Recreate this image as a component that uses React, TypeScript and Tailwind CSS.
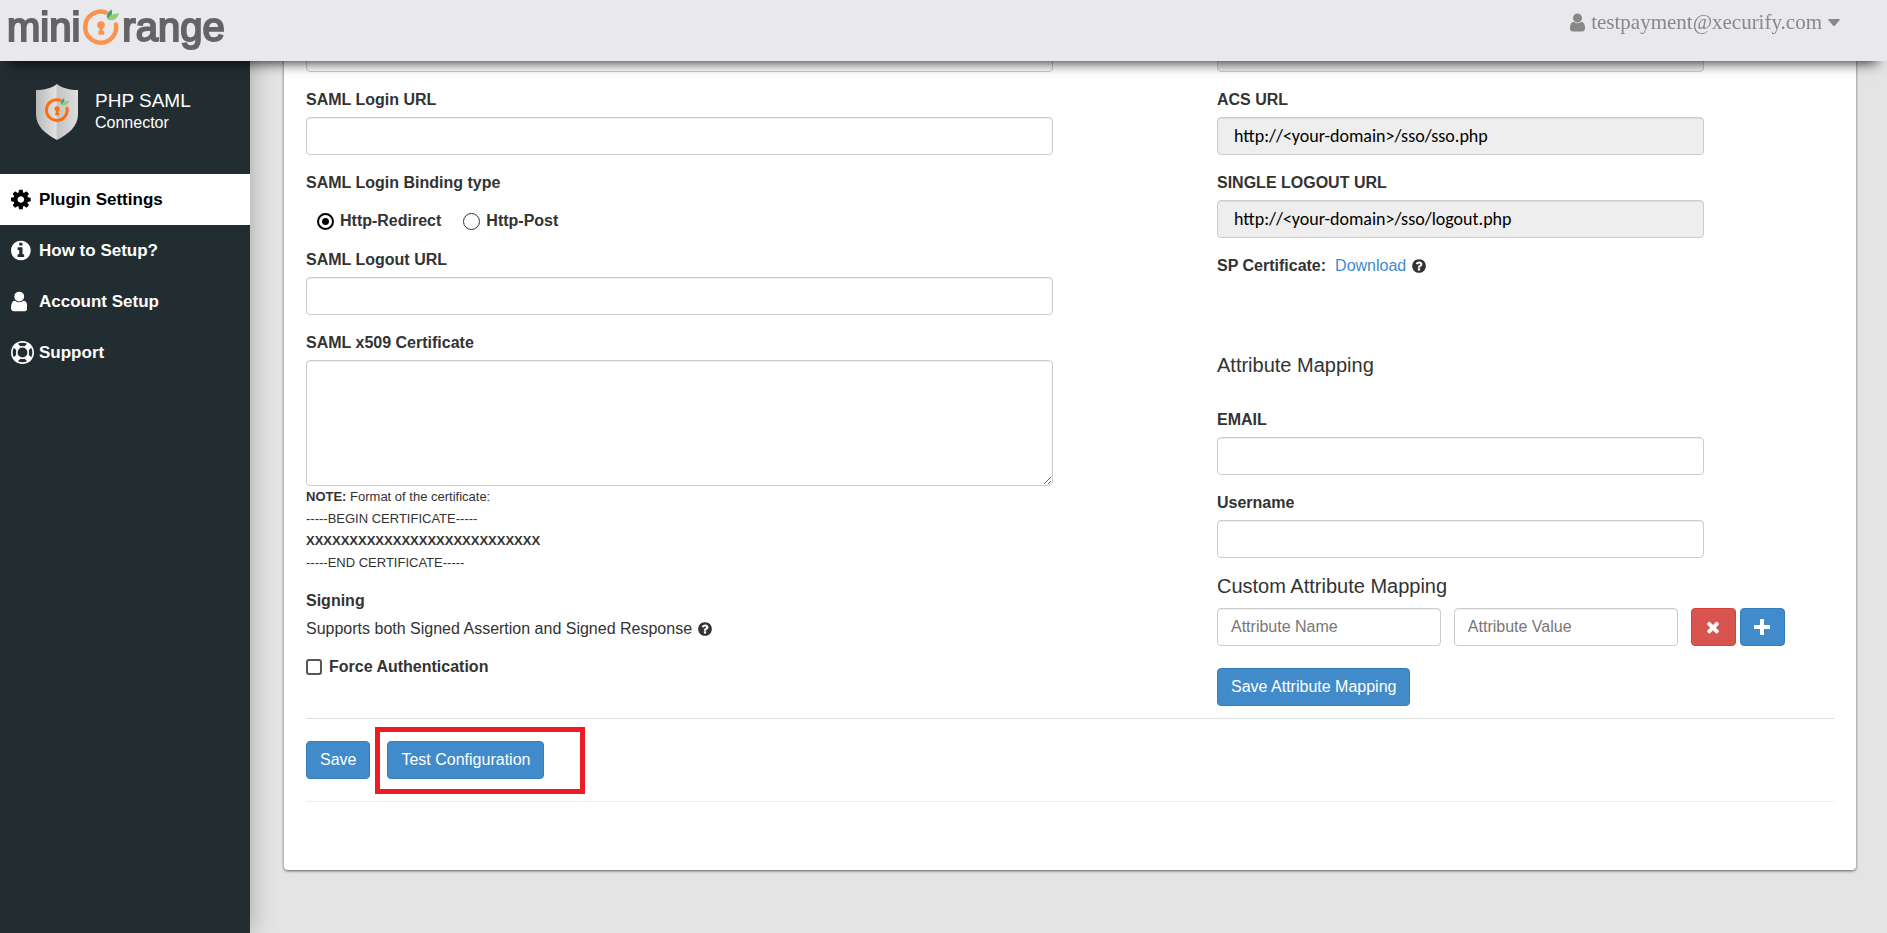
import { FC, ReactNode, useState } from "react";
import clsx from "clsx";

interface GlyphProps {
  path: string;
  viewBox?: string;
  className?: string;
}

const Glyph: FC<GlyphProps> = ({
  path,
  viewBox = "0 0 1792 1792",
  className,
}) => (
  <svg
    viewBox={viewBox}
    className={clsx("shrink-0", className)}
    fill="currentColor"
    aria-hidden="true"
  >
    <path d={path} />
  </svg>
);

const COG =
  "M1024 896q0-106-75-181t-181-75-181 75-75 181 75 181 181 75 181-75 75-181zm512-109v222q0 12-8 23t-20 13l-185 28q-19 54-39 91 35 50 107 138 10 12 10 25t-9 23q-27 37-99 108t-94 71q-12 0-26-9l-138-108q-44 23-91 38-16 136-29 186-7 28-36 28h-222q-14 0-24.5-8.5t-11.5-21.5l-28-184q-49-16-90-37l-141 107q-10 9-25 9-14 0-25-11-126-114-165-168-7-10-7-23 0-12 8-23 15-21 51-66.5t54-70.5q-27-50-41-99l-183-27q-13-2-21-12.5t-8-23.5v-222q0-12 8-23t19-13l186-28q14-46 39-92-40-57-107-138-10-12-10-24 0-10 9-23 26-36 98.5-107.5t94.500-71.500q13 0 26 10l138 107q44-23 91-38 16-136 29-186 7-28 36-28h222q14 0 24.500 8.500t11.500 21.500l28 184q49 16 90 37l142-107q9-9 24-9 13 0 25 10 129 119 165 170 7 8 7 22 0 12-8 23-15 21-51 66.500t-54 70.500q26 50 41 98l183 28q13 2 21 12.500t8 23.500z";
const INFO =
  "M1152 1376v-160q0-14-9-23t-23-9h-96v-512q0-14-9-23t-23-9h-320q-14 0-23 9t-9 23v160q0 14 9 23t23 9h96v320h-96q-14 0-23 9t-9 23v160q0 14 9 23t23 9h448q14 0 23-9t9-23zm-128-896v-160q0-14-9-23t-23-9h-192q-14 0-23 9t-9 23v160q0 14 9 23t23 9h192q14 0 23-9t9-23zm640 416q0 209-103 385.5t-279.5 279.5-385.5 103-385.5-103-279.5-279.5-103-385.5 103-385.5 279.5-279.5 385.5-103 385.5 103 279.5 279.5 103 385.5z";
const USER =
  "M1536 1399q0 109-62.5 187t-150.5 78h-854q-88 0-150.5-78t-62.5-187q0-85 8.5-160.5t31.5-152 58.5-131 94-89 134.5-34.5q131 128 313 128t313-128q76 0 134.5 34.5t94 89 58.500 131 31.500 152 8.500 160.500zm-256-887q0 159-112.500 271.500t-271.500 112.500-271.500-112.500-112.500-271.500 112.500-271.500 271.500-112.500 271.500 112.500 112.500 271.500z";
const LIFE_RING =
  "M896 0q182 0 348 71t286 191 191 286 71 348-71 348-191 286-286 191-348 71-348-71-286-191-191-286-71-348 71-348 191-286 286-191 348-71zm0 128q-190 0-361 90l194 194q82-28 167-28t167 28l194-194q-171-90-361-90zm-678 1129l194-194q-28-82-28-167t28-167l-194-194q-90 171-90 361t90 361zm678 407q190 0 361-90l-194-194q-82 28-167 28t-167-28l-194 194q171 90 361 90zm0-384q159 0 271.5-112.5t112.5-271.5-112.5-271.5-271.5-112.5-271.5 112.5-112.5 271.5 112.5 271.5 271.5 112.5zm484-217l194 194q90-171 90-361t-90-361l-194 194q28 82 28 167t-28 167z";
const QUESTION =
  "M1024 1376v-192q0-14-9-23t-23-9h-192q-14 0-23 9t-9 23v192q0 14 9 23t23 9h192q14 0 23-9t9-23zm256-672q0-88-55.5-163t-138.5-116-170-41q-243 0-371 213-15 24 8 42l132 100q7 6 19 6 16 0 25-12 53-68 86-92 34-24 86-24 48 0 85.5 26t37.5 59q0 38-20 61t-68 45q-63 28-115.5 86.5t-52.5 125.5v36q0 14 9 23t23 9h192q14 0 23-9t9-23q0-19 21.5-49.5t54.5-49.5q32-18 49-28.5t46-35 44.5-48 28-60.5 12.5-81zm384 192q0 209-103 385.5t-279.5 279.5-385.5 103-385.5-103-279.5-279.5-103-385.5 103-385.5 279.5-279.5 385.5-103 385.5 103 279.5 279.5 103 385.5z";
const TIMES =
  "M1490 1322q0 40-28 68l-136 136q-28 28-68 28t-68-28l-294-294-294 294q-28 28-68 28t-68-28l-136-136q-28-28-28-68t28-68l294-294-294-294q-28-28-28-68t28-68l136-136q28-28 68-28t68 28l294 294 294-294q28-28 68-28t68 28l136 136q28 28 28 68t-28 68l-294 294 294 294q28 28 28 68z";

const navItems = [
  { label: "Plugin Settings", path: COG, viewBox: "0 0 1536 1792" },
  { label: "How to Setup?", path: INFO, viewBox: "128 0 1536 1792" },
  { label: "Account Setup", path: USER, viewBox: "256 0 1280 1792" },
  { label: "Support", path: LIFE_RING, viewBox: "0 0 1792 1792" },
];

// open ring with a keyhole and two leaves, drawn in a 36x36 box
const OrangeMark = ({ color }: { color: string }) => (
  <>
    <path
      d="M22.500 3.400A15.500 15.500 0 1 0 33 15.500"
      fill="none"
      stroke={color}
      strokeWidth="4.500"
      strokeLinecap="round"
    />
    <circle cx="18" cy="16" r="3.800" fill={color} />
    <path d="M16.400 17h3.200v5h1.600v3.800h-5.800v-3.800h1z" fill={color} />
    <path d="M24 9c-1-3 .5-6 4.500-8.500C30 4 28.500 8 25.500 9.800z" fill="#4f9d6b" />
    <path d="M24.500 10.500C26 6.500 30 4.500 36 4.500c-1.500 5-6 8.500-11.500 6z" fill="#8ed072" />
  </>
);

const Logo = () => (
  <a
    href="#"
    className="flex items-baseline text-[40px] leading-[46px] text-[#636466] [-webkit-text-stroke:2px_#636466]"
  >
    <span>mini</span>
    <svg
      viewBox="0 0 36 36"
      className="mx-[3px] h-9 w-9 self-center overflow-visible"
      aria-hidden="true"
    >
      <OrangeMark color="#f8944f" />
    </svg>
    <span>range</span>
  </a>
);

const Shield = () => (
  <svg viewBox="0 0 42 56" className="h-14 w-[42px] shrink-0" aria-hidden="true">
    <defs>
      <linearGradient id="steel" x1="0" x2="1">
        <stop offset="0" stopColor="#b9b9b9" />
        <stop offset="0.48" stopColor="#e2e2e2" />
        <stop offset="0.5" stopColor="#c4c4c4" />
        <stop offset="1" stopColor="#dedede" />
      </linearGradient>
    </defs>
    <path
      d="M21 0c5 4 13 6 21 6v24c0 13-10 20-21 26C10 50 0 43 0 30V6c8 0 16-2 21-6z"
      fill="url(#steel)"
    />
    <svg x="9" y="14" width="24" height="24" viewBox="0 0 36 36" overflow="visible">
      <OrangeMark color="#ff6d0d" />
    </svg>
  </svg>
);

const inputClass =
  "block h-[38px] w-full rounded border border-[#ccc] bg-white px-[13px] text-base text-[#555] shadow-[inset_0_1px_1px_rgba(0,0,0,0.075)] placeholder:text-[#777]";
const readOnlyClass =
  "block h-[38px] w-full rounded border border-[#ccc] bg-[#eee] px-4 font-[Carlito,Lato,sans-serif] text-lg text-black shadow-[inset_0_1px_1px_rgba(0,0,0,0.075)]";
const buttonClass =
  "h-[38px] rounded border border-[#357ebd] bg-[#428bca] px-[13px] text-base text-white";

interface FieldProps {
  id: string;
  label: string;
  children?: ReactNode;
}

const Field: FC<FieldProps> = ({ id, label, children }) => (
  <div className="mb-[17px]">
    <label htmlFor={id} className="mb-[6px] block font-bold">
      {label}
    </label>
    {children ?? <input id={id} type="text" className={inputClass} />}
  </div>
);

const radioClass =
  "h-[17px] w-[17px] appearance-none rounded-full border border-[#333] bg-white checked:border-2 checked:border-black checked:bg-[radial-gradient(circle,#000_3px,transparent_4px)]";

const App = () => {
  const [active, setActive] = useState("Plugin Settings");
  const [binding, setBinding] = useState("redirect");

  return (
    <div className="flex min-h-screen bg-[#e4e4e4] font-['Liberation_Sans',Arial,sans-serif] text-base leading-[22px] text-[#333]">
      <header className="fixed inset-x-0 top-0 z-20 flex h-[61px] items-start justify-between bg-[#e9e8ed] pt-1 pr-[47px] pl-[7px] shadow-[0_12px_12px_-10px_rgba(0,0,0,0.8)]">
        <Logo />
        <button
          type="button"
          className="flex h-9 items-center gap-[6px] font-['Liberation_Serif','Times_New_Roman',serif] text-[21px] text-[#888]"
        >
          <Glyph path={USER} viewBox="256 0 1280 1792" className="h-[21px] w-[15px]" />
          testpayment@xecurify.com
          <svg viewBox="0 0 12 7" className="h-[7px] w-3" fill="currentColor" aria-hidden="true">
            <path d="M1 0h10q1.500 0 .5 1.200L7 6.500q-1 1-2 0L.5 1.200Q-.5 0 1 0z" />
          </svg>
        </button>
      </header>

      <aside className="z-10 w-[250px] shrink-0 bg-[#222d32] pt-[61px] text-white shadow-[0_0_24px_rgba(0,0,0,0.3)]">
        <div className="flex h-[113px] items-start gap-[17px] pt-[23px] pl-9">
          <Shield />
          <div className="pt-[6px]">
            <p className="text-[19px]">PHP SAML</p>
            <p>Connector</p>
          </div>
        </div>
        <nav>
          {navItems.map((item) => (
            <a
              key={item.label}
              href="#"
              onClick={() => setActive(item.label)}
              className={clsx(
                "flex h-[51px] items-center gap-1 pl-[11px] text-[17px] font-bold",
                active === item.label && "bg-white text-black"
              )}
            >
              <span className="flex w-6">
                <Glyph path={item.path} viewBox={item.viewBox} className="h-[23px] w-auto" />
              </span>
              {item.label}
            </a>
          ))}
        </nav>
      </aside>

      <main className="min-w-0 flex-1 pr-[31px] pl-[34px]">
        <div className="rounded-b bg-white px-[22px] pt-[34px] pb-[68px] shadow-[0_1px_3px_rgba(0,0,0,0.6)]">
          <div className="grid grid-cols-[747fr_617fr] gap-x-[164px] border-b border-[#ddd] pb-3">
            <section>
              <input aria-label="Issuer" type="text" className={clsx(inputClass, "mb-[17px]")} />
              <Field id="login-url" label="SAML Login URL" />
              <fieldset className="mb-[17px]">
                <legend className="mb-4 font-bold">SAML Login Binding type</legend>
                <div className="flex gap-[22px] pl-[11px] font-bold">
                  <label className="flex items-center gap-[6px]">
                    <input
                      type="radio"
                      name="binding"
                      className={radioClass}
                      checked={binding === "redirect"}
                      onChange={() => setBinding("redirect")}
                    />
                    Http-Redirect
                  </label>
                  <label className="flex items-center gap-[6px]">
                    <input
                      type="radio"
                      name="binding"
                      className={radioClass}
                      checked={binding === "post"}
                      onChange={() => setBinding("post")}
                    />
                    Http-Post
                  </label>
                </div>
              </fieldset>
              <Field id="logout-url" label="SAML Logout URL" />
              <label htmlFor="certificate" className="mb-[6px] block font-bold">
                SAML x509 Certificate
              </label>
              <textarea
                id="certificate"
                className="block h-[126px] w-full resize rounded border border-[#ccc] px-3 py-[6px] shadow-[inset_0_1px_1px_rgba(0,0,0,0.075)]"
              />
              <div className="mb-4 text-[13px]">
                <p>
                  <b>NOTE:</b> Format of the certificate:
                </p>
                <p className="font-medium">-----BEGIN CERTIFICATE-----</p>
                <p className="font-bold">XXXXXXXXXXXXXXXXXXXXXXXXXXX</p>
                <p className="font-medium">-----END CERTIFICATE-----</p>
              </div>
              <h4 className="mb-[6px] font-bold">Signing</h4>
              <p className="mb-4 flex items-center gap-[5px]">
                Supports both Signed Assertion and Signed Response
                <Glyph path={QUESTION} className="h-4 w-4" />
              </p>
              <label className="flex items-center gap-[7px] font-bold">
                <input
                  type="checkbox"
                  className="h-4 w-4 appearance-none rounded-[3px] border-2 border-[#555] bg-white checked:bg-[#428bca]"
                />
                Force Authentication
              </label>
            </section>

            <section>
              <div className="w-[79%]">
                <input
                  aria-label="Entity ID"
                  type="text"
                  readOnly
                  className={clsx(readOnlyClass, "mb-[17px]")}
                />
                <Field id="acs-url" label="ACS URL">
                  <input
                    id="acs-url"
                    readOnly
                    defaultValue="http://<your-domain>/sso/sso.php"
                    className={readOnlyClass}
                  />
                </Field>
                <Field id="slo-url" label="SINGLE LOGOUT URL">
                  <input
                    id="slo-url"
                    readOnly
                    defaultValue="http://<your-domain>/sso/logout.php"
                    className={readOnlyClass}
                  />
                </Field>
                <p className="flex items-center">
                  <b className="mr-[9px]">SP Certificate:</b>
                  <a href="#" className="mr-[5px] text-[#428bca]">
                    Download
                  </a>
                  <Glyph path={QUESTION} className="h-4 w-4" />
                </p>
                <h3 className="mt-[77px] mb-[33px] text-xl leading-[22px]">Attribute Mapping</h3>
                <Field id="email" label="EMAIL" />
                <Field id="username" label="Username" />
              </div>
              <h3 className="mb-[11px] text-xl leading-[22px]">Custom Attribute Mapping</h3>
              <div className="mb-[22px] flex w-[92%] items-center">
                <div className="mr-[13px] flex flex-1 gap-[13px]">
                  <input aria-label="Attribute Name" placeholder="Attribute Name" className={inputClass} />
                  <input aria-label="Attribute Value" placeholder="Attribute Value" className={inputClass} />
                </div>
                <button
                  type="button"
                  aria-label="Remove attribute"
                  className="mr-1 flex h-[38px] w-[45px] items-center justify-center rounded border border-[#d43f3a] bg-[#d9534f] text-white"
                >
                  <Glyph path={TIMES} className="h-[18px] w-[18px]" />
                </button>
                <button
                  type="button"
                  aria-label="Add attribute"
                  className="flex h-[38px] w-[45px] items-center justify-center rounded border border-[#357ebd] bg-[#428bca] text-white"
                >
                  <Glyph path="M6 0h4v6h6v4h-6v6H6v-6H0V6h6z" viewBox="0 0 16 16" className="h-4 w-4" />
                </button>
              </div>
              <button type="button" className={buttonClass}>
                Save Attribute Mapping
              </button>
            </section>
          </div>

          <div className="flex gap-[17px] border-b border-[#eee] py-[22px]">
            <button type="button" className={buttonClass}>
              Save
            </button>
            <div className="relative">
              <button type="button" className={buttonClass}>
                Test Configuration
              </button>
              <span className="pointer-events-none absolute -top-[14px] -right-[41px] -bottom-[15px] -left-3 border-[5px] border-[#ed1c24]" />
            </div>
          </div>
        </div>
      </main>
    </div>
  );
};

export default App;
